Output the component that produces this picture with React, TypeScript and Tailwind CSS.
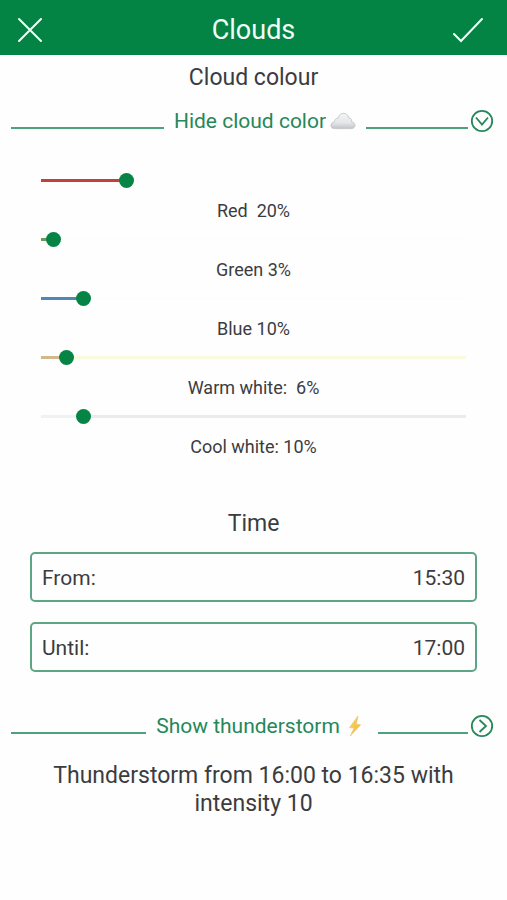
import { useState, type ReactNode } from "react";

type Channel = {
  id: string;
  label: string;
  value: number;
  fill: string;
  track: string;
};

const channels: Channel[] = [
  { id: "red", label: "Red  20%", value: 20.3, fill: "bg-[#c0433a]", track: "bg-transparent" },
  { id: "green", label: "Green 3%", value: 3, fill: "bg-[#6f9a58]", track: "bg-[#fdfdfd]" },
  { id: "blue", label: "Blue 10%", value: 10, fill: "bg-[#4f88b6]", track: "bg-[#fdfdfd]" },
  { id: "warm", label: "Warm white:  6%", value: 6.2, fill: "bg-[#d2b98a]", track: "bg-[#fafadc]" },
  { id: "cool", label: "Cool white: 10%", value: 10, fill: "bg-[#f1f1f1]", track: "bg-[#ebebeb]" },
];

function ChannelSlider({ channel }: { channel: Channel }) {
  const [value, setValue] = useState(channel.value);
  return (
    <div className="flex h-[59px] flex-col">
      <div className="grid h-4 items-center">
        <div className={`col-start-1 row-start-1 mx-2 h-[3px] ${channel.track}`}>
          <div className={`h-full ${channel.fill}`} style={{ width: `${value}%` }} />
        </div>
        <input
          id={channel.id}
          type="range"
          min={0}
          max={100}
          step="any"
          value={value}
          onChange={(e) => setValue(Number(e.target.value))}
          className="col-start-1 row-start-1 h-4 w-full cursor-pointer appearance-none bg-transparent [&::-webkit-slider-thumb]:h-[15px] [&::-webkit-slider-thumb]:w-[15px] [&::-webkit-slider-thumb]:appearance-none [&::-webkit-slider-thumb]:rounded-full [&::-webkit-slider-thumb]:bg-[#058446]"
        />
      </div>
      <label htmlFor={channel.id} className="mt-[11px] text-center text-[18px] leading-6 whitespace-pre">
        {channel.label}
      </label>
    </div>
  );
}

function CloudIcon() {
  return (
    <svg viewBox="0 0 26 18" className="h-[18px] w-[26px]" aria-hidden="true">
      <defs>
        <linearGradient id="cloud" x1="0" y1="0" x2="0" y2="1">
          <stop offset="0" stopColor="#f4f4f6" />
          <stop offset="0.6" stopColor="#e6e7ea" />
          <stop offset="1" stopColor="#c3c4c9" />
        </linearGradient>
      </defs>
      <path
        d="M4.6 16.6C2.4 16.6.9 15.3.9 13.4c0-1.9 1.4-3.2 3.4-3.4.2-2.3 1.6-3.9 3.9-4 .8-2.9 2.6-4.7 5.2-4.7 3 0 5 1.9 5.3 4.5 1.7.1 3 1.4 3 3.1 0 .4 0 .8-.1 1.1 2 .1 3.4 1.4 3.4 3.2 0 2-1.5 3.4-3.8 3.4z"
        fill="url(#cloud)"
        stroke="#bfc0c3"
        strokeWidth="0.8"
      />
    </svg>
  );
}

function BoltIcon() {
  return (
    <svg viewBox="0 0 24 24" className="h-6 w-6" aria-hidden="true">
      <defs>
        <linearGradient id="bolt" x1="0" y1="0" x2="1" y2="1">
          <stop offset="0" stopColor="#f7d66a" />
          <stop offset="1" stopColor="#f2b632" />
        </linearGradient>
      </defs>
      <path
        d="M14 2 5.500 13.600l4.600.4-3.800 8L16.600 10.800l-4.400-.6z"
        fill="url(#bolt)"
        stroke="#efc468"
        strokeWidth="0.7"
        strokeLinejoin="round"
      />
    </svg>
  );
}

function SectionToggle({
  label,
  icon,
  chevron,
  expanded,
}: {
  label: string;
  icon: ReactNode;
  chevron: string;
  expanded: boolean;
}) {
  return (
    <button type="button" aria-expanded={expanded} className="flex w-full items-center pr-[13px] pl-[11px] text-[#25875a]">
      <span className="mt-[14px] h-[2px] flex-[3] bg-[#4ba27c]" />
      <span className="flex items-center px-[10px] text-[21px] leading-7">
        {label}
        <span className="ml-1">{icon}</span>
      </span>
      <span className="mt-[14px] h-[2px] flex-[2] bg-[#4ba27c]" />
      <svg viewBox="0 0 24 24" className="ml-[2px] h-6 w-6" fill="none" stroke="#25875a" strokeWidth="1.8" aria-hidden="true">
        <circle cx="12" cy="12" r="10.2" />
        <path d={chevron} />
      </svg>
    </button>
  );
}

function TimeField({ id, label, value }: { id: string; label: string; value: string }) {
  return (
    <div className="flex h-[50px] items-center rounded-[5px] border-2 border-[#5da585] px-[10px] pt-1 text-[21px]">
      <label htmlFor={id}>{label}</label>
      <input id={id} type="text" defaultValue={value} className="min-w-0 flex-1 bg-transparent text-right outline-none" />
    </div>
  );
}

export default function App() {
  return (
    <div className="min-h-screen bg-[#fefefe] font-[Roboto,sans-serif] text-[#3c3c3e]">
      <header className="flex h-[55px] items-center justify-between bg-[#038444] pt-1 pr-6 pl-4 text-[#f2fff6]">
        <button type="button" aria-label="Close" className="w-10">
          <svg viewBox="0 0 28 28" className="h-7 w-7" fill="none" stroke="currentColor" strokeWidth="2" strokeLinecap="round" aria-hidden="true">
            <path d="M3 3 25 25M25 3 3 25" />
          </svg>
        </button>
        <h1 className="text-[27px] leading-8">Clouds</h1>
        <button type="button" aria-label="Save" className="w-8">
          <svg viewBox="0 0 32 28" className="h-7 w-8" fill="none" stroke="currentColor" strokeWidth="2" strokeLinecap="round" aria-hidden="true">
            <path d="M3 18 10 25 31 3" />
          </svg>
        </button>
      </header>
      <main>
        <h2 className="pt-[5px] text-center text-[23px] leading-9">Cloud colour</h2>
        <div className="mt-[11px]">
          <SectionToggle label="Hide cloud color" icon={<CloudIcon />} chevron="M6 8.5 12 15.5 18 8.5" expanded />
        </div>
        <div className="mt-[37px] px-[33px]">
          {channels.map((c) => (
            <ChannelSlider key={c.id} channel={c} />
          ))}
        </div>
        <h2 className="mt-[39px] text-center text-[23px] leading-9">Time</h2>
        <div className="mt-[10px] flex flex-col gap-5 px-[30px]">
          <TimeField id="from" label="From:" value="15:30" />
          <TimeField id="until" label="Until:" value="17:00" />
        </div>
        <div className="mt-10">
          <SectionToggle label="Show thunderstorm" icon={<BoltIcon />} chevron="M9.5 6 16 12 9.5 18" expanded={false} />
        </div>
        <p className="mt-[22px] px-10 text-center text-[23px] leading-7">Thunderstorm from 16:00 to 16:35 with intensity 10</p>
      </main>
    </div>
  );
}
